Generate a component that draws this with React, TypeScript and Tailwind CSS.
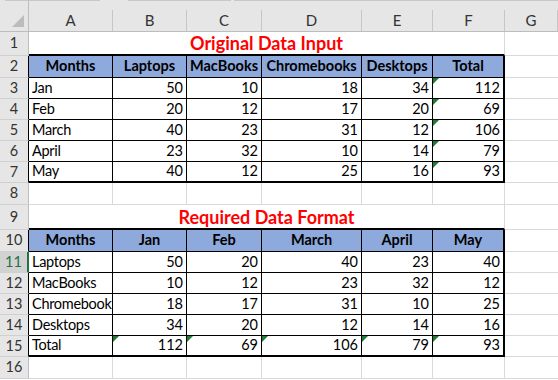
import React from 'react';

const COLS = ['A', 'B', 'C', 'D', 'E', 'F', 'G'];

type Row = {
    n: number;
    h: string;
    title?: string;
    head?: string[];
    data?: (string | number)[];
    table?: 'first' | 'mid' | 'last';
    flag?: number[];
};

const ROWS: Row[] = [
    { n: 1, h: 'h-[24px]', title: 'Original Data Input' },
    { n: 2, h: 'h-[22px]', head: ['Months', 'Laptops', 'MacBooks', 'Chromebooks', 'Desktops', 'Total'], table: 'first' },
    { n: 3, h: 'h-[21px]', data: ['Jan', 50, 10, 18, 34, 112], table: 'mid', flag: [5] },
    { n: 4, h: 'h-[21px]', data: ['Feb', 20, 12, 17, 20, 69], table: 'mid', flag: [5] },
    { n: 5, h: 'h-[21px]', data: ['March', 40, 23, 31, 12, 106], table: 'mid', flag: [5] },
    { n: 6, h: 'h-[21px]', data: ['April', 23, 32, 10, 14, 79], table: 'mid', flag: [5] },
    { n: 7, h: 'h-[21px]', data: ['May', 40, 12, 25, 16, 93], table: 'last', flag: [5] },
    { n: 8, h: 'h-[22px]' },
    { n: 9, h: 'h-[25px]', title: 'Required Data Format' },
    { n: 10, h: 'h-[22px]', head: ['Months', 'Jan', 'Feb', 'March', 'April', 'May'], table: 'first' },
    { n: 11, h: 'h-[21px]', data: ['Laptops', 50, 20, 40, 23, 40], table: 'mid' },
    { n: 12, h: 'h-[21px]', data: ['MacBooks', 10, 12, 23, 32, 12], table: 'mid' },
    { n: 13, h: 'h-[21px]', data: ['Chromebook', 18, 17, 31, 10, 25], table: 'mid' },
    { n: 14, h: 'h-[21px]', data: ['Desktops', 34, 20, 12, 14, 16], table: 'mid' },
    { n: 15, h: 'h-[21px]', data: ['Total', 112, 69, 106, 79, 93], table: 'last', flag: [1, 2, 3, 4, 5] },
    { n: 16, h: 'h-[22px]' },
];

// little green "number stored as text" marker in the cell corner
const Flag = () => (
    <span className="absolute left-0 top-0 w-0 h-0 border-t-[6px] border-t-[#1e7b34] border-r-[6px] border-r-transparent" />
);

const RowHeader = ({ row }: { row: Row }) => {
    const active = row.n === 11;
    const edge = row.table ? 'border-r-black' : 'border-r-[#bdbdbd]';
    return (
        <div
            className={`${row.h} flex items-center justify-center border-b border-b-[#d0d0d0] ${active ? 'bg-[#d2d2d2] text-[#217346] border-r-2 border-r-[#217346]' : `bg-[#e6e6e6] text-[#333] border-r ${edge}`}`}
        >
            {row.n}
        </div>
    );
};

const SheetRow = ({ row }: { row: Row }) => {
    const cells: React.ReactNode[] = [];

    if (row.title) {
        cells.push(
            <div
                key="t"
                className={`${row.h} col-span-6 flex items-center justify-center border-b-2 border-b-black border-r border-r-[#d9d9d9] text-[18px] font-bold text-[#ff0000]`}
            >
                {row.title}
            </div>
        );
    } else if (row.head || row.data) {
        const vals = row.head ?? row.data ?? [];
        vals.forEach((v, i) => {
            const right = i === 5 ? 'border-r-2' : 'border-r';
            const bottom = row.table === 'last' ? 'border-b-2' : 'border-b';
            const align = row.head
                ? 'justify-center font-bold bg-[#8ea9db]'
                : i === 0
                    ? 'justify-start pl-[3px] tracking-[-0.3px]'
                    : 'justify-end pr-[3px]';
            cells.push(
                <div
                    key={i}
                    className={`${row.h} relative flex items-center overflow-hidden whitespace-nowrap border-black ${right} ${bottom} ${align}`}
                >
                    {row.flag?.includes(i) && <Flag />}
                    {v}
                </div>
            );
        });
    } else {
        for (let i = 0; i < 6; i++) {
            cells.push(
                <div key={i} className={`${row.h} border-r border-b border-[#d9d9d9]`} />
            );
        }
    }

    return (
        <>
            <RowHeader row={row} />
            {cells}
            <div className={`${row.h} border-b border-b-[#d9d9d9]`} />
        </>
    );
};

export default function App() {
    return (
        <div
            className="w-[558px] h-[380px] overflow-hidden bg-white text-black text-[14.5px] leading-none"
            style={{ fontFamily: 'Lato, "Liberation Sans", sans-serif' }}
        >
            {/* edge of the formula bar above the sheet */}
            <div className="flex h-px bg-[#e6e6e6]">
                <div className="ml-[5px] w-[95px] bg-[#c8c8c8]" />
                <div className="ml-[28px] w-[103px] bg-[#c8c8c8]" />
                <div className="ml-[3px] flex-1 bg-[#c8c8c8]" />
            </div>
            <div className="grid grid-cols-[29px_84px_74px_75px_100px_71px_72px_1fr]">
                <div className="h-[31px] bg-[#e6e6e6] border-b border-b-[#bdbdbd] border-r border-r-[#bdbdbd] flex items-end justify-end pr-[4px] pb-[4px]">
                    <svg width="12" height="12" viewBox="0 0 12 12">
                        <path d="M12 0 L12 12 L0 12 Z" fill="#bcbcbc" />
                    </svg>
                </div>
                {COLS.map(c => (
                    <div key={c} className="h-[31px] bg-[#e6e6e6] border-b border-b-[#bdbdbd] flex items-end">
                        <div className="h-[21px] w-full flex items-center justify-center text-[#333] text-[15px] border-r border-r-[#c6c6c6]">
                            {c}
                        </div>
                    </div>
                ))}
                {ROWS.map(r => (
                    <SheetRow key={r.n} row={r} />
                ))}
            </div>
        </div>
    );
}
